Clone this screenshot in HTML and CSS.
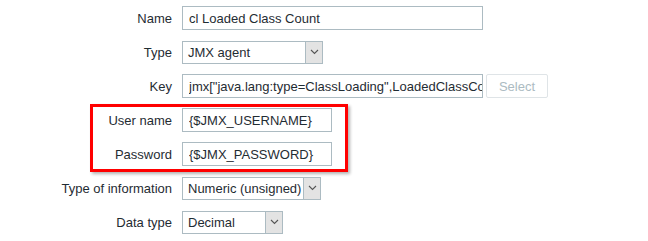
FILE: index.html
```html
<!DOCTYPE html>
<html lang="en">

<head>
  <meta charset="UTF-8">
  <title>Item</title>
  <link rel="stylesheet" href="styles.css">
</head>

<body>
  <div class="form">
    <div class="row">
      <label>Name</label>
      <div class="field"><input type="text" class="input wide" value="cl Loaded Class Count"></div>
    </div>
    <div class="row">
      <label>Type</label>
      <div class="field">
        <div class="select" style="width: 141px">
          <span class="value">JMX agent</span>
          <span class="arrow"><svg width="9" height="6" viewBox="0 0 9 6"><path d="M1 1 L4.5 4.5 L8 1" fill="none" stroke="#555" stroke-width="1.1"/></svg></span>
        </div>
      </div>
    </div>
    <div class="row">
      <label>Key</label>
      <div class="field">
        <input type="text" class="input wide" value='jmx["java.lang:type=ClassLoading",LoadedClassCount]'>
        <button class="btn" disabled>Select</button>
      </div>
    </div>
    <div class="row">
      <label>User name</label>
      <div class="field"><input type="text" class="input narrow" value="{$JMX_USERNAME}"></div>
    </div>
    <div class="row">
      <label>Password</label>
      <div class="field"><input type="text" class="input narrow" value="{$JMX_PASSWORD}"></div>
    </div>
    <div class="row">
      <label>Type of information</label>
      <div class="field">
        <div class="select" style="width: 139px">
          <span class="value">Numeric (unsigned)</span>
          <span class="arrow"><svg width="9" height="6" viewBox="0 0 9 6"><path d="M1 1 L4.5 4.5 L8 1" fill="none" stroke="#555" stroke-width="1.1"/></svg></span>
        </div>
      </div>
    </div>
    <div class="row">
      <label>Data type</label>
      <div class="field">
        <div class="select" style="width: 101px">
          <span class="value">Decimal</span>
          <span class="arrow"><svg width="9" height="6" viewBox="0 0 9 6"><path d="M1 1 L4.5 4.5 L8 1" fill="none" stroke="#555" stroke-width="1.1"/></svg></span>
        </div>
      </div>
    </div>
    <!-- highlight around credentials -->
    <div class="highlight"></div>
  </div>
</body>

</html>
```

FILE: styles.css
```css
body {
  margin: 0;
  background: #fff;
  font-family: "Liberation Sans", Arial, sans-serif;
  font-size: 13px;
  color: #1f2c33;
}

.form {
  position: relative;
  display: flex;
  flex-direction: column;
  gap: 10px;
  padding-top: 6px;
}

.row {
  display: grid;
  grid-template-columns: 172px auto;
  column-gap: 10px;
  align-items: center;
  height: 24px;
}

.row label {
  text-align: right;
}

.field {
  display: flex;
  align-items: center;
  gap: 3px;
}

.input {
  box-sizing: border-box;
  height: 24px;
  margin: 0;
  border: 1px solid #acbbc2;
  border-radius: 0;
  padding: 0 0 0 6px;
  font-family: inherit;
  font-size: 13px;
  color: #1f2c33;
  outline: none;
}

.input.wide {
  width: 301px;
}

.input.narrow {
  width: 150px;
}

.select {
  box-sizing: border-box;
  display: flex;
  height: 23px;
  border: 1px solid #acbbc2;
}

.select .value {
  flex: 1;
  line-height: 21px;
  padding-left: 5px;
  white-space: nowrap;
}

.select .arrow {
  width: 16px;
  display: flex;
  align-items: center;
  justify-content: center;
  background: #e3e3e3;
  border-left: 1px solid #acbbc2;
}

.btn {
  box-sizing: border-box;
  height: 24px;
  width: 62px;
  background: #fff;
  border: 1px solid #dfe4e7;
  border-radius: 2px;
  color: #acbbc2;
  font-family: inherit;
  font-size: 13px;
  padding: 0;
}

.highlight {
  position: absolute;
  left: 90px;
  top: 104px;
  width: 258px;
  height: 68px;
  box-sizing: border-box;
  border: 3px solid #ff0000;
  box-shadow: 2px 2px 3px rgba(0, 0, 0, 0.3);
}
```
